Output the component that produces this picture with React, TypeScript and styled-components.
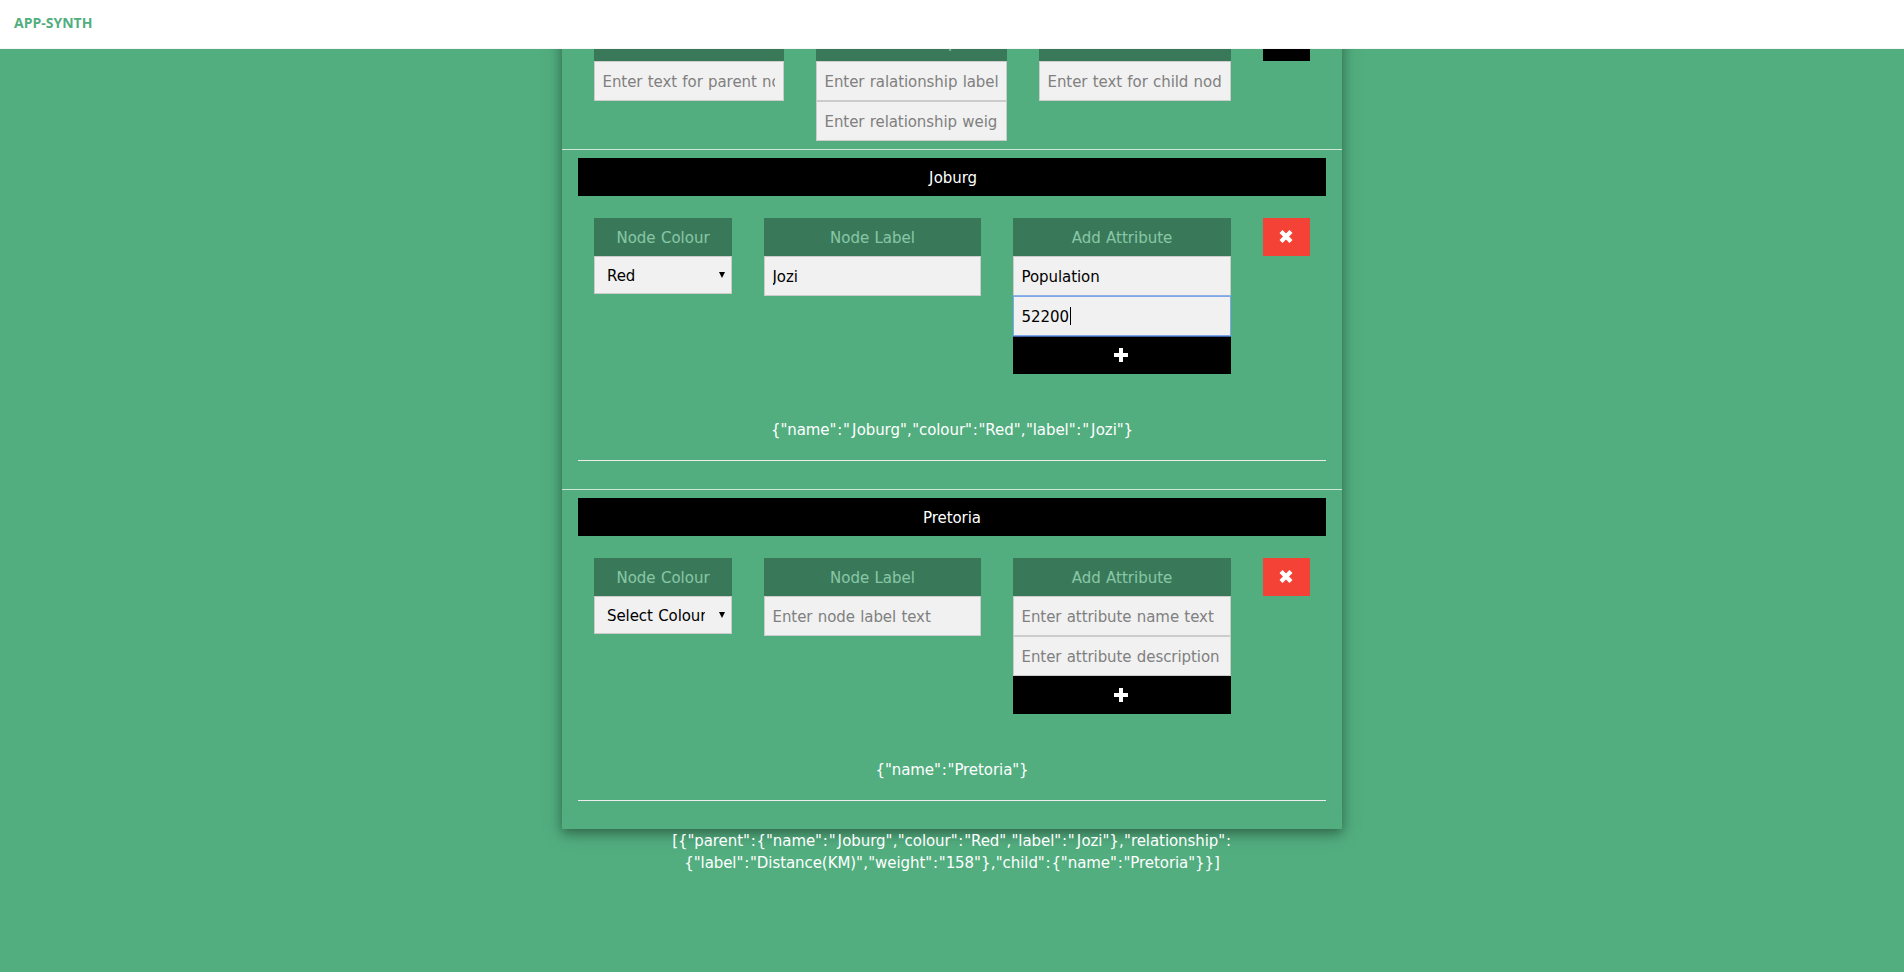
import React from 'react';
import styled, { createGlobalStyle, css } from 'styled-components';

const GlobalStyle = createGlobalStyle`
  *, *::before, *::after { box-sizing: border-box; }
  html, body { margin: 0; background: #52ae7f; }
  body {
    height: 972px;
    overflow: hidden;
    font: 15px/22.5px Verdana, 'DejaVu Sans', sans-serif;
    letter-spacing: -0.07px;
    word-spacing: 0.6px;
    color: #fff;
  }
`;

const TopBar = styled.header`
  position: fixed;
  inset: 0 0 auto 0;
  z-index: 2;
  display: flex;
  align-items: center;
  height: 49px;
  padding: 0 14px 2px;
  background: #fff;
  border-bottom: 1px solid #f6f6f6;
`;

const Brand = styled.span`
  font: bold 14px/20px 'Open Sans', sans-serif;
  letter-spacing: 0;
  color: #52ae7f;
`;

const Page = styled.main`
  width: 780px;
  margin: 0 auto;
`;

const Card = styled.div`
  padding-top: 23px;
  box-shadow: 0 4px 10px 0 rgba(0, 0, 0, 0.3), 0 4px 20px 0 rgba(0, 0, 0, 0.19);
`;

const Columns = styled.div<{ $template: string }>`
  display: grid;
  grid-template-columns: ${(p) => p.$template};
  column-gap: 32px;
  align-items: start;
  padding: 0 16px;
`;

const RelationRow = styled.section`
  height: 126px;
  padding: 0 16px;
`;

const NodeSection = styled.section`
  height: 340px;
  padding: 8px 16px 0;
  border-top: 1px solid #cfe5d9;
`;

const NodeTitle = styled.div`
  height: 38px;
  margin-bottom: 22px;
  padding-top: 1px;
  line-height: 38px;
  text-align: center;
  background: #000;
`;

const Stack = styled.div`
  display: flex;
  flex-direction: column;
  min-width: 0;
`;

const ColumnLabel = styled.div`
  height: 38px;
  padding-top: 1px;
  line-height: 38px;
  text-align: center;
  letter-spacing: 0;
  background: #000;
  opacity: 0.3;
`;

const fieldBox = css`
  display: block;
  width: 100%;
  height: 40px;
  margin: 0;
  padding: 2px 8px 0 7.5px;
  border: 1px solid #ccc;
  border-radius: 0;
  background: #f1f1f1;
  color: #000;
  font: inherit;
  letter-spacing: inherit;
  word-spacing: inherit;
`;

const Field = styled.input`
  ${fieldBox}
  outline: none;
  &::placeholder { color: #808080; opacity: 1; }
`;

const ActiveField = styled.div`
  ${fieldBox}
  position: relative;
  display: flex;
  align-items: center;
  border-color: #7da7e8;
  box-shadow: 0 -1px 0 #8fb2e6, 0 1px 0 #3f62a8;
`;

const Caret = styled.span`
  width: 1px;
  height: 18px;
  margin: 0 0 2px 1px;
  background: #000;
`;

const SelectWrap = styled.div`
  display: grid;
  align-items: center;
  > * { grid-area: 1 / 1; }
  > svg { justify-self: end; margin: 0 7px 1px 0; pointer-events: none; }
`;

const Select = styled.select`
  ${fieldBox}
  appearance: none;
  height: 38px;
  padding: 2px 26px 0 12px;
`;

const IconButton = styled.button<{ $tone: string }>`
  display: flex;
  align-items: center;
  justify-content: center;
  height: 38px;
  width: 100%;
  margin: 0;
  padding: 0 2px 0 0;
  border: 0;
  background: ${(p) => p.$tone};
`;

const NodeJson = styled.div`
  padding-top: 1px;
  text-align: center;
`;

const Rule = styled.hr`
  height: 1px;
  margin: 18.5px 0 0;
  border: 0;
  background: #eee;
`;

const NodeBody = styled.div`
  height: 200px;
`;

const Result = styled.p`
  margin: 0;
  padding-top: 1px;
  line-height: 22px;
  text-align: center;
`;

const Wide = styled.span<{ $pad: string }>`
  padding: ${(p) => p.$pad};
`;

const glyphPadding: Record<string, string> = {
  ':': '0 0.87px',
  ',': '0 0.35px',
  J: '0 0.4px 0 2px',
};

const Spaced = ({ text }: { text: string }) => (
  <>
    {text.split(/([:,J])/).map((part, i) =>
      glyphPadding[part] ? (
        <Wide key={i} $pad={glyphPadding[part]}>{part}</Wide>
      ) : (
        part
      ),
    )}
  </>
);

const Cross = () => (
  <svg width="14" height="14" viewBox="0 0 14 14" stroke="#fff" strokeWidth="4.3">
    <path d="M2 1.5 12 11.5M12 1.5 2 11.5" />
  </svg>
);

const Plus = () => (
  <svg width="14" height="14" viewBox="0 0 14 14" fill="#fff">
    <path d="M5 0h4v5h5v4H9v5H5V9H0V5h5z" />
  </svg>
);

type NodeProps = {
  name: string;
  colour: string;
  label?: string;
  attribute?: string;
  value?: string;
  json: string;
};

const NodeEditor = ({ name, colour, label, attribute, value, json }: NodeProps) => (
  <NodeSection>
    <NodeTitle><Spaced text={name} /></NodeTitle>
    <NodeBody>
      <Columns $template="138px 217px 218px 47px">
        <Stack>
          <ColumnLabel>Node Colour</ColumnLabel>
          <SelectWrap>
            <Select defaultValue={colour}>
              <option>{colour}</option>
            </Select>
            <svg width="6" height="6" viewBox="0 0 6 6">
              <path d="M0 0h6L3 6z" />
            </svg>
          </SelectWrap>
        </Stack>
        <Stack>
          <ColumnLabel>Node Label</ColumnLabel>
          <Field defaultValue={label} placeholder="Enter node label text" />
        </Stack>
        <Stack>
          <ColumnLabel>Add Attribute</ColumnLabel>
          <Field defaultValue={attribute} placeholder="Enter attribute name text" />
          {value ? (
            <ActiveField>
              {value}
              <Caret />
            </ActiveField>
          ) : (
            <Field placeholder="Enter attribute description" />
          )}
          <IconButton $tone="#000" aria-label="Add"><Plus /></IconButton>
        </Stack>
        <IconButton $tone="#f44336" aria-label="Remove"><Cross /></IconButton>
      </Columns>
    </NodeBody>
    <NodeJson><Spaced text={json} /></NodeJson>
    <Rule />
  </NodeSection>
);

export default function App() {
  return (
    <>
      <GlobalStyle />
      <TopBar>
        <Brand>APP-SYNTH</Brand>
      </TopBar>
      <Page>
        <Card>
          <RelationRow>
            <Columns $template="190px 191px 192px 47px">
              <Stack>
                <ColumnLabel>Parent</ColumnLabel>
                <Field placeholder="Enter text for parent node" />
              </Stack>
              <Stack>
                <ColumnLabel>Relationship</ColumnLabel>
                <Field placeholder="Enter ralationship label" />
                <Field placeholder="Enter relationship weight" />
              </Stack>
              <Stack>
                <ColumnLabel>Child</ColumnLabel>
                <Field placeholder="Enter text for child node" />
              </Stack>
              <IconButton $tone="#000" aria-label="Add" />
            </Columns>
          </RelationRow>
          <NodeEditor
            name="Joburg"
            colour="Red"
            label="Jozi"
            attribute="Population"
            value="52200"
            json={'{"name":"Joburg","colour":"Red","label":"Jozi"}'}
          />
          <NodeEditor name="Pretoria" colour="Select Colour" json={'{"name":"Pretoria"}'} />
        </Card>
        <Result>
          <Spaced text={'[{"parent":{"name":"Joburg","colour":"Red","label":"Jozi"},"relationship":'} />
          <br />
          <Spaced text={'{"label":"Distance(KM)","weight":"158"},"child":{"name":"Pretoria"}}]'} />
        </Result>
      </Page>
    </>
  );
}
